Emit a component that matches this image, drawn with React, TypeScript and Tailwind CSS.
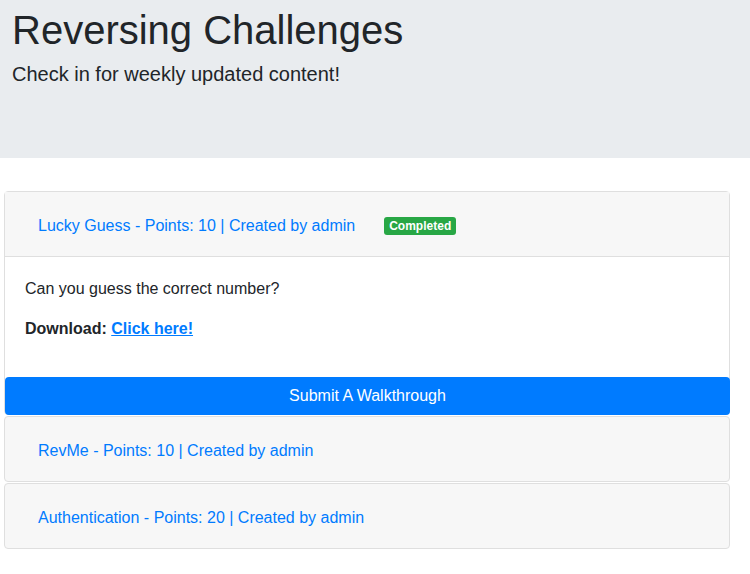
const challenges = [
  { title: "RevMe - Points: 10 | Created by admin" },
  { title: "Authentication - Points: 20 | Created by admin" },
];

export default function App() {
  return (
    <div className="min-h-[574px] bg-white font-['Liberation_Sans',Arial,sans-serif] text-[#212529]">
      {/* Jumbotron */}
      <div className="h-[158px] bg-[#e9ecef] px-3 pt-[6px]">
        <h1 className="text-[40px] leading-[1.2]">Reversing Challenges</h1>
        <p className="mt-[5px] text-[20px] leading-[1.5]">Check in for weekly updated content!</p>
      </div>

      <div className="mt-[33px] ml-1 w-[726px]">
        {/* Open card */}
        <div className="rounded border border-[#dfdfdf]">
          <div className="flex h-[65px] items-center border-b border-[#dfdfdf] bg-[#f7f7f7] pt-[4px] pl-[33px]">
            <a className="text-base text-[#007bff]">Lucky Guess - Points: 10 | Created by admin</a>
            <span className="ml-[29px] rounded-[3px] bg-[#28a745] px-[5px] py-[2px] text-[12px] font-bold leading-[14px] text-white">
              Completed
            </span>
          </div>
          <div className="px-5 pt-5 pb-5 text-base leading-6">
            <p className="mb-4">Can you guess the correct number?</p>
            <p className="mb-4">
              <b>Download:</b>{" "}
              <a className="font-bold text-[#007bff] underline">Click here!</a>
            </p>
          </div>
          <button className="-mb-px block h-[38px] w-[725px] rounded bg-[#007bff] text-base text-white">
            Submit A Walkthrough
          </button>
        </div>

        {challenges.map((c, i) => (
          <div key={i} className="mt-px rounded border border-[#dfdfdf] bg-[#f7f7f7]">
            <div className="flex h-[64px] items-center pt-[4px] pl-[33px]">
              <a className="text-base text-[#007bff]">{c.title}</a>
            </div>
          </div>
        ))}
      </div>
    </div>
  );
}
